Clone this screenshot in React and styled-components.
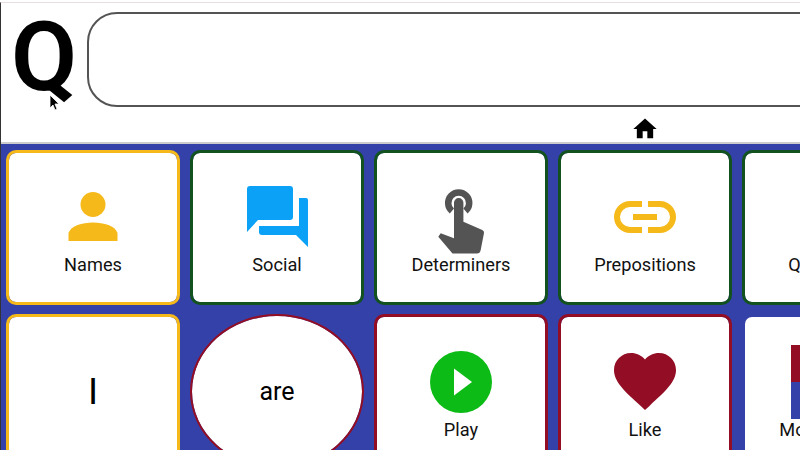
import React from 'react'
import styled, {createGlobalStyle} from 'styled-components'

const Color = {
  blue: '#3441a8',
  yellow: '#f6b91a',
  green: '#12521f',
  red: '#930e24',
  sky: '#0aa1f7',
  gray: '#545454',
  play: '#0dbb16',
}

const GlobalStyle = createGlobalStyle`
  html, body {
    margin: 0;
    padding: 0;
    width: 800px;
    height: 450px;
    overflow: hidden;
    background: white;
    font-family: Roboto, "Liberation Sans", sans-serif;
  }
  #root {
    padding-top: 2px;
  }
`

const Page = styled.div`
  width: 800px;
  height: 448px;
  overflow: hidden;
  display: flex;
  flex-direction: column;
  box-sizing: border-box;
  border-left: 1px solid #333;
  border-top: 1px solid #e8dfe4;
`

const Header = styled.div`
  position: relative;
  height: 139px;
  flex: none;
  background: white;
  display: flex;
  align-items: flex-start;
  border-bottom: 2px solid #ccc;
`

const Letter = styled.div`
  width: 86px;
  flex: none;
  padding-left: 10px;
  box-sizing: border-box;
  font-size: 96px;
  line-height: 120px;
  font-weight: 560;
  color: black;
  margin-top: -6px;
`

const Input = styled.div`
  width: 760px;
  height: 95px;
  flex: none;
  margin-top: 9px;
  box-sizing: border-box;
  border: 2px solid ${Color.gray};
  border-radius: 30px;
`

const HomeButton = styled.svg`
  position: absolute;
  left: 630px;
  top: 112px;
  width: 28px;
  height: 28px;
  fill: black;
`

const Cursor = styled.svg`
  position: absolute;
  left: 48px;
  top: 91px;
  width: 11px;
  height: 17px;
`

const Board = styled.div`
  flex: 1;
  min-height: 0;
  background: ${Color.blue};
  display: grid;
  grid-template-columns: repeat(5, 174px);
  grid-auto-rows: 155px;
  column-gap: 10px;
  row-gap: 9px;
  padding: 6px 5px;
`

const Card = styled.div`
  box-sizing: border-box;
  padding-top: ${p => p.$pad || 0}px;
  background: white;
  background-clip: padding-box;
  border: ${p => p.$thin ? 2 : 3}px solid ${p => p.$color};
  border-radius: ${p => p.$round ? '50%' : '10px'};
  display: flex;
  flex-direction: column;
  align-items: center;
  justify-content: center;
  color: #111;
  font-size: 18.200px;
  line-height: 22px;
  white-space: nowrap;
`

const IconBox = styled.div`
  height: 72px;
  margin-bottom: 1px;
  box-sizing: border-box;
  padding-top: ${p => p.$drop || 0}px;
  display: flex;
  align-items: center;
  justify-content: center;
`

const BigText = styled.span`
  font-size: ${p => p.$size}px;
  line-height: 1;
  color: black;
`

const Flag = styled.div`
  width: 76px;
  height: 74px;
  background: linear-gradient(${Color.red} 50%, ${Color.blue} 50%);
`

const PersonIcon = () => (
  <svg width='50' height='50' viewBox='0 0 50 50' fill={Color.yellow}>
    <circle cx='25' cy='12.500' r='12.500'/>
    <path d='M0.500 49V41C3 34 14 30.600 25 30.600S47 34 49.500 41V49Z'/>
  </svg>
)

const ChatIcon = () => (
  <svg width='61' height='61' viewBox='0 0 61 61' fill={Color.sky}>
    <path d='M3 0H43Q46 0 46 3V31Q46 34 43 34H11L0 46V3Q0 0 3 0Z'/>
    <path d='M52 12H59Q61 12 61 14V61L49 49H15Q12 49 12 46V40H52Z'/>
  </svg>
)

const TouchIcon = () => (
  <svg width='47' height='65' viewBox='0 0 47 65' fill={Color.gray}>
    <path d='M13.900 22A10.500 10.500 0 1 1 27.500 22' fill='none' stroke={Color.gray} strokeWidth='6.500'/>
    <path d='M20.700 9A4.700 4.700 0 0 1 25.400 13.700V32.700L44.300 41Q46.300 42 46 44L42.700 61Q42 64.500 39 64.500H14.500L0.300 47.700L2.700 44.300L16 49.300V13.700A4.700 4.700 0 0 1 20.700 9Z'/>
  </svg>
)

const LinkIcon = () => (
  <svg width='62' height='32' viewBox='0 0 62 32' fill='none' stroke={Color.yellow} strokeWidth='6'>
    <path d='M28 3H16A13 13 0 0 0 16 29H28'/>
    <path d='M34 3H46A13 13 0 0 1 46 29H34'/>
    <path d='M19 16H43'/>
  </svg>
)

const PlayIcon = () => (
  <svg width='62' height='62' viewBox='0 0 62 62'>
    <circle cx='31' cy='31' r='31' fill={Color.play}/>
    <path d='M24 17.500V44.500L42 31Z' fill='white'/>
  </svg>
)

const HeartIcon = () => (
  <svg width='62' height='57' viewBox='2 3 20 18.350' fill={Color.red}>
    <path d='M12 21.350l-1.450-1.320C5.400 15.360 2 12.280 2 8.500 2 5.420 4.420 3 7.500 3c1.740 0 3.410.810 4.500 2.090C13.090 3.810 14.760 3 16.500 3 19.580 3 22 5.420 22 8.500c0 3.780-3.400 6.860-8.550 11.540L12 21.350z'/>
  </svg>
)

const categories = [
  {label: 'Names', color: Color.yellow, icon: <PersonIcon/>},
  {label: 'Social', color: Color.green, icon: <ChatIcon/>},
  {label: 'Determiners', color: Color.green, icon: <TouchIcon/>, drop: 10},
  {label: 'Prepositions', color: Color.green, icon: <LinkIcon/>},
  {label: 'Questions', color: Color.green},
]

export default function App () {
  return (
    <Page>
      <GlobalStyle/>
      <Header>
        <Letter>Q</Letter>
        <Input/>
        <HomeButton viewBox='0 0 24 24'>
          <path d='M10 20v-6h4v6h5v-8h3L12 3 2 12h3v8z'/>
        </HomeButton>
        <Cursor viewBox='0 0 11 17'>
          <path d='M1 1V14L4 11L6 16L8 15L6 10H10Z' fill='black' stroke='white' strokeWidth='0.800'/>
        </Cursor>
      </Header>
      <Board>
        {categories.map(c => (
          <Card key={c.label} $color={c.color} $pad={1}>
            <IconBox $drop={c.drop}>{c.icon}</IconBox>
            {c.label}
          </Card>
        ))}
        <Card $color={Color.yellow}><BigText $size={37}>I</BigText></Card>
        <Card $color={Color.red} $thin $round><BigText $size={25}>are</BigText></Card>
        <Card $color={Color.red} $pad={3}>
          <IconBox><PlayIcon/></IconBox>
          Play
        </Card>
        <Card $color={Color.red} $pad={3}>
          <IconBox><HeartIcon/></IconBox>
          Like
        </Card>
        <Card $color='transparent' $pad={3}>
          <IconBox><Flag/></IconBox>
          Modal verbs
        </Card>
      </Board>
    </Page>
  )
}
